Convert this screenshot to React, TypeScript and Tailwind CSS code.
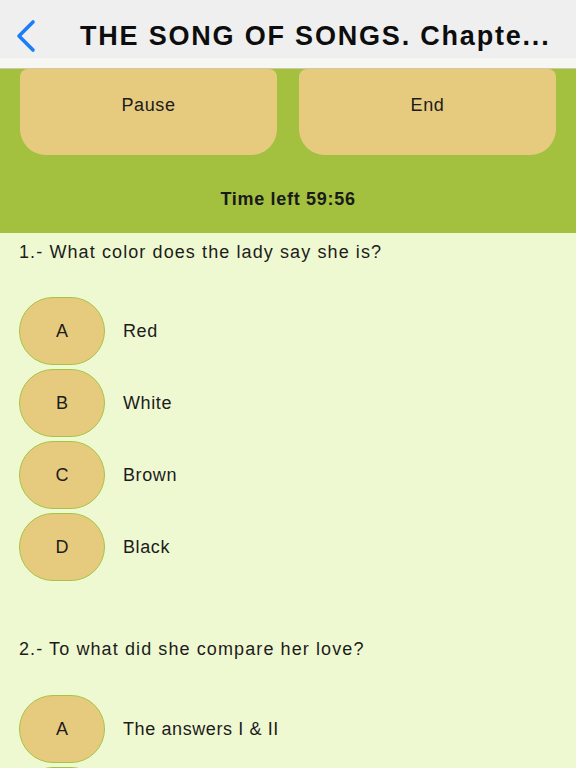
import React from "react";

const font = { fontFamily: '"Liberation Sans", Arial, sans-serif' };

function Option({ letter, text }: { letter: string; text: string }) {
  return (
    <div className="flex items-center h-[68px]">
      <div className="ml-[19px] w-[86px] h-[68px] rounded-[34px] border border-[#a6c444] bg-[#e6cb7e] flex items-center justify-center text-[18px] text-[#1c1c1c]">
        {letter}
      </div>
      <div className="ml-[18px] text-[18px] tracking-[0.6px] text-[#1c1c1c]">{text}</div>
    </div>
  );
}

export default function App() {
  return (
    <div className="w-[576px] h-[768px] overflow-hidden bg-[#eff9d1]" style={font}>
      <div className="h-[58px] bg-[#efeff0] flex items-center relative">
        <svg className="absolute left-[14px] top-[19px]" width="24" height="34" viewBox="0 0 24 34">
          <path d="M19 3 L5 17 L19 31" fill="none" stroke="#1b7ef6" strokeWidth="3.6" strokeLinecap="round" strokeLinejoin="round" />
        </svg>
        <div className="ml-[80px] text-[27px] font-bold text-[#0d0d0d] tracking-[1.8px] mt-[14px] whitespace-nowrap">
          THE SONG OF SONGS. Chapte...
        </div>
      </div>
      <div className="h-[11px] bg-[#f6f7f2] border-b border-[#cfc9a8]"></div>
      <div className="bg-[#a3c13e] h-[164px] flex flex-col">
        <div className="flex gap-[22px] px-[20px]">
          <div className="flex-1 h-[86px] bg-[#e6cb7e] rounded-b-[26px] rounded-t-[8px] flex items-center justify-center pb-[14px] text-[18px] tracking-[0.6px] text-[#1c1c1c]">
            Pause
          </div>
          <div className="flex-1 h-[86px] bg-[#e6cb7e] rounded-b-[26px] rounded-t-[8px] flex items-center justify-center pb-[14px] text-[18px] tracking-[0.6px] text-[#1c1c1c]">
            End
          </div>
        </div>
        <div className="flex-1 flex items-center justify-center text-[18px] font-bold tracking-[0.7px] text-[#1a1a1a] pt-[10px]">
          Time left 59:56
        </div>
      </div>
      <div className="h-[38px] flex items-center pl-[19px] text-[18px] tracking-[1.1px] text-[#1c1c1c]">
        1.- What color does the lady say she is?
      </div>
      <div className="h-[26px]"></div>
      <div className="flex flex-col gap-[4px]">
        <Option letter="A" text="Red" />
        <Option letter="B" text="White" />
        <Option letter="C" text="Brown" />
        <Option letter="D" text="Black" />
      </div>
      <div className="h-[51px]"></div>
      <div className="h-[34px] flex items-center pl-[19px] text-[18px] tracking-[1.1px] text-[#1c1c1c]">
        2.- To what did she compare her love?
      </div>
      <div className="h-[29px]"></div>
      <div className="flex flex-col gap-[4px]">
        <Option letter="A" text="The answers I &amp; II" />
        <div className="ml-[19px] w-[86px] h-[68px] rounded-[34px] border border-[#a6c444] bg-[#e6cb7e]"></div>
      </div>
    </div>
  );
}
